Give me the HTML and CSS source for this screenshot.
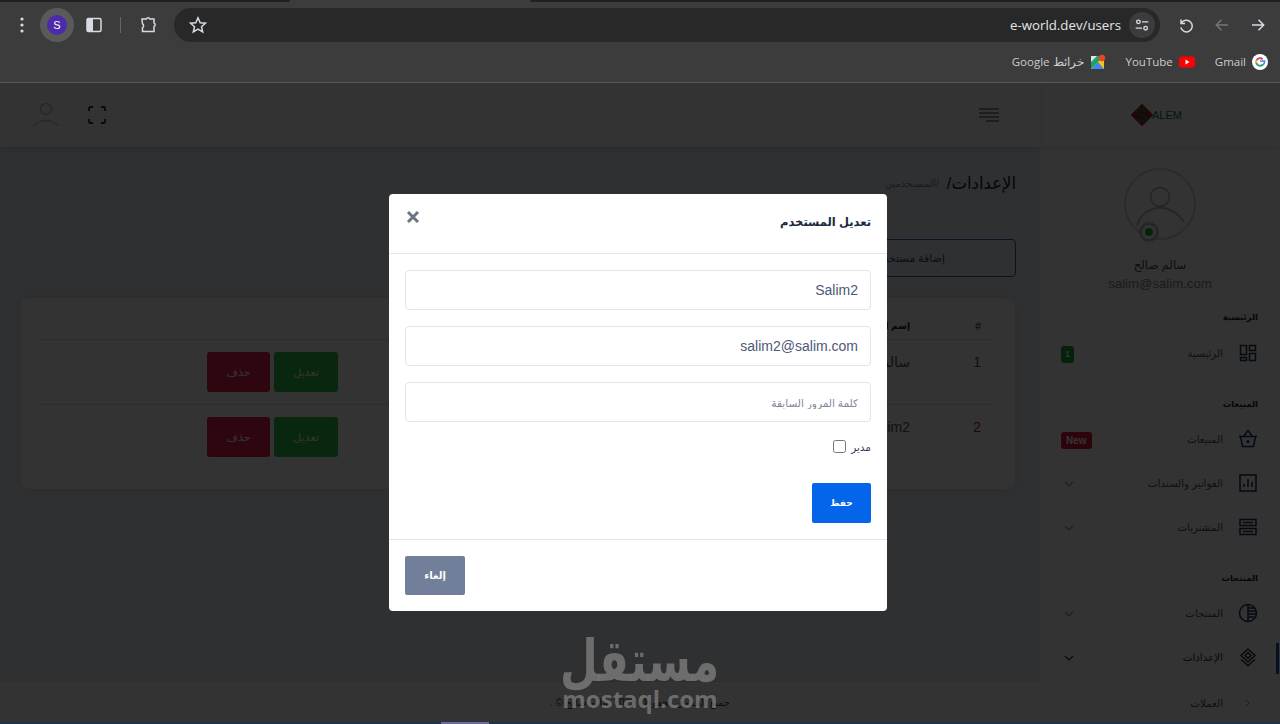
FILE: index.html
```html
<!DOCTYPE html>
<html lang="ar">
<head>
    <meta charset="UTF-8">
    <meta name="viewport" content="width=device-width, initial-scale=1.0">
    <title>e-world.dev/users</title>
    <link rel="stylesheet" href="styles.css">
</head>
<body>
    <!-- Browser top -->
    <div class="tab-strip">
        <span class="tab-dark tab-left"></span>
        <span class="tab-active"></span>
        <span class="tab-dark tab-right"></span>
    </div>
    <div class="toolbar">
        <svg class="tool-icon dots" viewBox="0 0 20 20"><circle cx="10" cy="4" r="1.6"/><circle cx="10" cy="10" r="1.6"/><circle cx="10" cy="16" r="1.6"/></svg>
        <div class="avatar-chip"><span class="avatar-letter">S</span></div>
        <svg class="tool-icon panel" viewBox="0 0 20 20"><rect x="3" y="3.5" width="14" height="13" rx="1.5" class="line"/><rect x="3" y="3.5" width="6" height="13" class="solid"/></svg>
        <span class="tool-sep"></span>
        <svg class="tool-icon ext" viewBox="0 0 20 20"><path class="line" d="M4 4h4.400a1.900 1.900 0 0 1 3.500 0H16v3.900a1.900 1.900 0 0 1 0 3.500V16.500H4.500v-3.800a2.300 2.300 0 0 0 0-3.900z"/></svg>
        <div class="omnibox">
            <svg class="tool-icon star" viewBox="0 0 20 20"><path class="line" d="M10 2.800l2.200 4.900 5.300.5-4 3.500 1.200 5.200-4.700-2.800-4.700 2.800 1.200-5.200-4-3.500 5.300-.5z"/></svg>
            <span class="url">e-world.dev/users</span>
            <span class="tune">
                <svg viewBox="0 0 20 20"><circle cx="6" cy="6.500" r="2" class="line"/><path class="line" d="M10 6.500h7M3 13.500h7"/><circle cx="14" cy="13.500" r="2" class="line"/></svg>
            </span>
        </div>
        <svg class="tool-icon reload" viewBox="0 0 20 20"><path class="line" d="M5 4.500v4h4M5.400 8.200a5.800 5.800 0 1 1-.6 4.200"/></svg>
        <svg class="tool-icon back" viewBox="0 0 20 20"><path class="line" d="M16 10H4.500M9.500 4.800L4.300 10l5.200 5.200"/></svg>
        <svg class="tool-icon forward" viewBox="0 0 20 20"><path class="line" d="M4 10h11.500M10.500 4.800l5.200 5.200-5.200 5.200"/></svg>
    </div>
    <div class="bookmarks">
        <div class="bookmark">
            <span>Google خرائط</span>
            <svg class="mark" viewBox="0 0 16 16">
                <rect x="1" y="2" width="13" height="13" fill="#1ea362"/>
                <path d="M1 15L14 2v13z" fill="#f5c518"/>
                <path d="M1 15l7-7 6 7z" fill="#4285f4"/>
                <path d="M1 2h6L1 8z" fill="#dfe3e8"/>
                <circle cx="12" cy="4" r="3.200" fill="#e8432e"/>
            </svg>
        </div>
        <div class="bookmark">
            <span>YouTube</span>
            <svg class="mark" viewBox="0 0 16 16"><rect y="2.500" width="16" height="11" rx="3" fill="#f00"/><path d="M6.500 5.500l4 2.500-4 2.500z" fill="#fff"/></svg>
        </div>
        <div class="bookmark">
            <span>Gmail</span>
            <svg class="mark" viewBox="0 0 16 16">
                <circle cx="8" cy="8" r="8" fill="#fff"/>
                <path d="M8 7h4.600c.2 2.800-1.600 4.800-4.600 4.800a3.800 3.800 0 0 1 0-7.600c1 0 1.900.4 2.600 1" fill="none" stroke="#4285f4" stroke-width="1.600"/>
                <path d="M4.600 6.200a3.800 3.800 0 0 1 6-1" fill="none" stroke="#ea4335" stroke-width="1.600"/>
                <path d="M4.300 8.900a3.800 3.800 0 0 1 .3-2.700" fill="none" stroke="#fbbc05" stroke-width="1.600"/>
                <path d="M4.300 8.900a3.800 3.800 0 0 0 6.200 1.800" fill="none" stroke="#34a853" stroke-width="1.600"/>
            </svg>
        </div>
    </div>

    <!-- App -->
    <div class="app" dir="rtl">
        <aside class="sidebar">
            <div class="logo">
                <span class="logo-mark"><span class="logo-s">S</span></span>
                <span class="logo-text">ALEM</span>
            </div>
            <div class="profile">
                <div class="profile-pic">
                    <svg viewBox="0 0 72 72" width="72" height="72">
                        <circle cx="36" cy="36" r="35" fill="#fff" stroke="#cfd4da" stroke-width="2"/>
                        <circle cx="36" cy="29" r="9.500" fill="none" stroke="#b9bfc6" stroke-width="2"/>
                        <path d="M13 58c3-12 13-18 23-18s18 5 24 14" fill="none" stroke="#b9bfc6" stroke-width="2"/>
                    </svg>
                    <span class="status-dot"></span>
                </div>
                <div class="profile-name">سالم صالح</div>
                <div class="profile-mail">salim@salim.com</div>
            </div>

            <div class="menu-title">الرئيسية</div>
            <div class="menu-item">
                <svg class="menu-icon" viewBox="0 0 20 20"><path d="M2.500 2.500h6v9h-6zM11.500 2.500h6v5h-6zM2.500 14.500h6v3h-6zM11.500 10.500h6v7h-6z"/></svg>
                <span>الرئيسية</span>
                <span class="badge badge-green">1</span>
            </div>

            <div class="menu-title">المبيعات</div>
            <div class="menu-item">
                <svg class="menu-icon" viewBox="0 0 20 20"><path d="M1 7.500h18M2.500 7.500l2 10h11l2-10M5.500 7.500L10 1.500l4.500 6"/><circle cx="10" cy="12.500" r=".8"/></svg>
                <span>المبيعات</span>
                <span class="badge badge-red">New</span>
            </div>
            <div class="menu-item">
                <svg class="menu-icon" viewBox="0 0 20 20"><path d="M2 2h16v16H2zM6 14v-3M10 14V6M14 14V9"/></svg>
                <span>الفواتير والسندات</span>
                <svg class="chevron" viewBox="0 0 12 12"><path d="M2 4l4 4 4-4"/></svg>
            </div>
            <div class="menu-item">
                <svg class="menu-icon" viewBox="0 0 20 20"><path d="M2 2.500h16v6H2zM2 11.500h16v6H2zM5 5.500h10M5 14.500h10"/></svg>
                <span>المشتريات</span>
                <svg class="chevron" viewBox="0 0 12 12"><path d="M2 4l4 4 4-4"/></svg>
            </div>

            <div class="menu-title">المنتجات</div>
            <div class="menu-item">
                <svg class="menu-icon" viewBox="0 0 20 20"><circle cx="10" cy="10" r="8.500"/><path d="M10 1.500v17M10 5h6M10 8h8M10 11h8M10 14h6"/></svg>
                <span>المنتجات</span>
                <svg class="chevron" viewBox="0 0 12 12"><path d="M2 4l4 4 4-4"/></svg>
            </div>
            <div class="menu-item menu-active">
                <svg class="menu-icon" viewBox="0 0 20 20"><path d="M10 2l7 6.500-7 6.500-7-6.500zM3 12.500l7 6 7-6M7 8.500l3-3 3 3-3 3z"/></svg>
                <span>الإعدادات</span>
                <svg class="chevron" viewBox="0 0 12 12"><path d="M2 4l4 4 4-4"/></svg>
            </div>
            <div class="menu-item sub-item">
                <svg class="sub-arrow" viewBox="0 0 20 20"><path d="M8 7l3 3-3 3"/></svg>
                <span>العملات</span>
            </div>
        </aside>

        <div class="main">
            <header class="top-header">
                <svg class="hamburger" viewBox="0 0 22 16"><path d="M1 2h20M1 6h20M1 10h20M8 14h13"/></svg>
                <div class="header-left">
                    <svg class="full-icon" viewBox="0 0 18 18"><path d="M1 5V2.500A1.500 1.500 0 0 1 2.500 1H5M13 1h2.500A1.500 1.500 0 0 1 17 2.500V5M17 13v2.500a1.500 1.500 0 0 1-1.500 1.500H13M5 17H2.500A1.500 1.500 0 0 1 1 15.500V13"/></svg>
                    <svg class="user-icon" viewBox="0 0 30 28"><circle cx="15" cy="8" r="5.500"/><path d="M2 25c4-4 8-5.500 13-5.500s9 1.500 13 5.500"/></svg>
                </div>
            </header>

            <div class="page-head">
                <h1 class="page-title">الإعدادات/</h1>
                <span class="crumb">/المستخدمين</span>
            </div>
            <div class="add-row">
                <button class="add-btn">إضافة مستخدم</button>
            </div>

            <div class="card">
                <table class="users-table">
                    <colgroup>
                        <col class="col-num"><col class="col-text"><col class="col-text"><col class="col-actions">
                    </colgroup>
                    <thead>
                        <tr><th>#</th><th>إسم المستخدم</th><th>البريد الإلكتروني</th><th></th></tr>
                    </thead>
                    <tbody>
                        <tr>
                            <td class="cell-num">1</td>
                            <td>سالم صالح</td>
                            <td>salim@salim.com</td>
                            <td class="cell-actions"><button class="row-btn btn-edit">تعديل</button><button class="row-btn btn-delete">حذف</button></td>
                        </tr>
                        <tr>
                            <td class="cell-num red-num">2</td>
                            <td>Salim2</td>
                            <td>salim2@salim.com</td>
                            <td class="cell-actions"><button class="row-btn btn-edit">تعديل</button><button class="row-btn btn-delete">حذف</button></td>
                        </tr>
                    </tbody>
                </table>
            </div>

            <footer class="page-footer">جميع الحقوق محفوظة 2023 سالم صالح © .</footer>
        </div>

        <!-- Modal -->
        <div class="overlay">
            <div class="modal">
                <div class="modal-header">
                    <h2 class="modal-title">تعديل المستخدم</h2>
                    <svg class="modal-close" viewBox="0 0 14 14"><path d="M2 2l10 10M12 2L2 12"/></svg>
                </div>
                <div class="modal-body">
                    <input class="field" type="text" value="Salim2">
                    <input class="field" type="text" value="salim2@salim.com">
                    <input class="field" type="password" placeholder="كلمة المرور السابقة">
                    <label class="check-row">مدير <input type="checkbox" class="check"></label>
                    <div class="save-row"><button class="save-btn">حفظ</button></div>
                </div>
                <div class="modal-footer">
                    <button class="cancel-btn">إلغاء</button>
                </div>
            </div>
        </div>
    </div>
    <div class="bottom-strip"><span class="strip-tab"></span></div>

    <!-- Watermark -->
    <div class="watermark">
        <div class="wm-ar">مستقل</div>
        <div class="wm-en">mostaql.com</div>
    </div>
</body>
</html>
```

FILE: styles.css
```css
/* General Styles */
html, body {
    margin: 0;
    height: 724px;
    overflow: hidden;
}

body {
    position: relative;
    display: flex;
    flex-direction: column;
    background: #3c3c3c;
    font-family: "Liberation Sans", "DejaVu Sans", sans-serif;
}

button {
    font-family: inherit;
    border: none;
}

/* Browser top */
.tab-strip {
    display: flex;
    height: 2px;
    background: #3c3c3c;
}

.tab-dark {
    background: #1f1f1f;
    height: 2px;
}

.tab-left {
    width: 290px;
    border-radius: 0 0 6px 0;
}

.tab-active {
    width: 240px;
}

.tab-right {
    flex: 1;
    border-radius: 0 0 0 6px;
}

.toolbar {
    display: flex;
    align-items: center;
    height: 34px;
    margin-top: 6px;
    padding-left: 12px;
}

.tool-icon {
    width: 20px;
    height: 20px;
    flex: none;
}

.tool-icon .line, .tune .line {
    fill: none;
    stroke: #d5dae3;
    stroke-width: 1.500;
}

.dots {
    fill: #d5dae3;
}

.avatar-chip {
    display: flex;
    align-items: center;
    justify-content: center;
    width: 34px;
    height: 34px;
    margin-left: 8px;
    border-radius: 50%;
    background: #5a5a5a;
}

.avatar-letter {
    width: 20px;
    height: 20px;
    border-radius: 50%;
    background: #4c2bab;
    color: #fff;
    font-size: 11px;
    line-height: 20px;
    text-align: center;
}

.panel {
    margin-left: 10px;
}

.panel .solid {
    fill: #d5dae3;
}

.tool-sep {
    width: 1px;
    height: 16px;
    margin-left: 16px;
    background: #666;
}

.ext {
    margin-left: 17px;
}

.omnibox {
    display: flex;
    align-items: center;
    width: 986px;
    height: 34px;
    margin-left: 16px;
    padding-left: 14px;
    box-sizing: border-box;
    border-radius: 17px;
    background: #282828;
}

.url {
    margin-left: auto;
    margin-right: 8px;
    color: #e4e6ea;
    font-family: "Open Sans", sans-serif;
    font-size: 13.250px;
}

.tune {
    display: flex;
    align-items: center;
    justify-content: center;
    width: 26px;
    height: 26px;
    margin-right: 5px;
    border-radius: 50%;
    background: #3c3c3c;
}

.tune svg {
    width: 18px;
    height: 18px;
}

.reload {
    margin-left: 16px;
}

.back {
    margin-left: 16px;
}

.back .line {
    stroke: #757575;
}

.forward {
    margin-left: 16px;
}

.bookmarks {
    display: flex;
    justify-content: flex-end;
    align-items: center;
    gap: 20px;
    height: 39px;
    padding: 0 12px 1px 0;
    border-bottom: 1px solid #565656;
    color: #c9ccd1;
    font-family: "Open Sans", sans-serif;
    font-size: 11.500px;
}

.bookmark {
    display: flex;
    align-items: center;
    gap: 6px;
}

.mark {
    width: 16px;
    height: 16px;
}

/* App layout */
.app {
    position: relative;
    display: flex;
    height: 639px;
    overflow: hidden;
    background: #ebeef5;
}

.bottom-strip {
    height: 2px;
    background: #1c3350;
}

.strip-tab {
    display: block;
    width: 48px;
    height: 2px;
    margin-left: 441px;
    background: #6d6aa0;
}

/* Sidebar */
.sidebar {
    flex: none;
    width: 240px;
    background: #fff;
    color: #3d4657;
}

.logo {
    display: flex;
    direction: ltr;
    align-items: center;
    justify-content: center;
    height: 64px;
    padding-right: 4px;
    box-shadow: 0 2px 6px rgba(20, 30, 60, 0.1);
}

.logo-mark {
    display: flex;
    align-items: center;
    justify-content: center;
    width: 16px;
    height: 16px;
    transform: rotate(45deg);
    background: #b3123a;
}

.logo-s {
    transform: rotate(-45deg);
    color: #107a2c;
    font-size: 21px;
    font-weight: bold;
}

.logo-text {
    margin-left: 2px;
    color: #1a6e35;
    font-size: 11px;
}

.profile {
    padding-top: 21px;
    text-align: center;
}

.profile-pic {
    position: relative;
    width: 72px;
    height: 72px;
    margin: 0 auto 15px;
}

.profile-pic svg {
    display: block;
}

.status-dot {
    position: absolute;
    left: 18px;
    top: 57px;
    width: 8px;
    height: 8px;
    border: 3px solid #fff;
    border-radius: 50%;
    box-shadow: 0 0 0 3px #b9bfc6;
    background: #1fa52f;
}

.profile-name {
    height: 20px;
    font-size: 11.700px;
    line-height: 20px;
}

.profile-mail {
    height: 18px;
    color: #7d8493;
    font-size: 13.200px;
    line-height: 18px;
}

.menu-title {
    height: 20px;
    margin: 14px 22px 4px 0;
    color: #14233f;
    font-size: 8.500px;
    font-weight: bold;
    line-height: 20px;
}

.menu-item + .menu-title {
    margin-top: 19px;
    margin-bottom: 3px;
}

.menu-item {
    position: relative;
    display: flex;
    align-items: center;
    gap: 15px;
    height: 44px;
    padding: 0 22px 0 21px;
    color: #4a5364;
    font-size: 10.300px;
}

.menu-icon {
    flex: none;
    width: 20px;
    height: 20px;
    fill: none;
    stroke: #16325c;
    stroke-width: 1.500;
}

.badge {
    position: absolute;
    left: 21px;
    top: 50%;
    height: 17px;
    margin-top: -7px;
    padding: 0 4px;
    border-radius: 3px;
    color: #fff;
    font-size: 9px;
    font-weight: bold;
    line-height: 17px;
    direction: ltr;
}

.badge-green {
    background: #1fa52f;
}

.badge-red {
    padding: 0 5px;
    background: #e0173f;
    font-size: 10px;
}

.chevron {
    position: absolute;
    left: 23px;
    top: 17px;
    width: 12px;
    height: 12px;
    fill: none;
    stroke: #8d95a5;
    stroke-width: 1.200;
}

.menu-active {
    color: #16325c;
}

.menu-active .chevron {
    stroke: #16325c;
}

.menu-active::after {
    content: "";
    position: absolute;
    right: 1px;
    top: 8px;
    width: 3px;
    height: 31px;
    background: #1d4fa8;
}

.sub-item {
    margin-top: 2px;
}

.sub-arrow {
    flex: none;
    width: 20px;
    height: 20px;
    fill: none;
    stroke: #8d95a5;
    stroke-width: 1;
}

/* Main column */
.main {
    flex: 1;
    display: flex;
    flex-direction: column;
    background: #ebeff8;
}

.top-header {
    display: flex;
    justify-content: space-between;
    align-items: center;
    flex: none;
    height: 64px;
    padding: 0 40px 0 31px;
    background: #fff;
    box-shadow: 0 3px 8px rgba(20, 30, 60, 0.12);
}

.hamburger {
    width: 22px;
    height: 16px;
    fill: none;
    stroke: #6b7280;
    stroke-width: 1.300;
}

.header-left {
    display: flex;
    align-items: center;
    gap: 27px;
}

.full-icon {
    width: 18px;
    height: 18px;
    fill: none;
    stroke: #1b2a45;
    stroke-width: 1.800;
}

.user-icon {
    width: 30px;
    height: 28px;
    fill: none;
    stroke: #c2c6cc;
    stroke-width: 1.500;
}

.page-head {
    display: flex;
    align-items: center;
    gap: 8px;
    height: 30px;
    margin: 21px 24px 0 0;
}

.page-title {
    margin: 0;
    color: #14233f;
    font-size: 16.500px;
    font-weight: normal;
}

.crumb {
    color: #7d8493;
    font-size: 10px;
}

.add-row {
    margin: 41px 24px 21px 0;
}

.add-btn {
    display: block;
    width: 207px;
    height: 38px;
    border: 1px solid #2a62b8;
    border-radius: 4px;
    background: transparent;
    color: #2a4d85;
    font-size: 11px;
    padding-right: 70px;
    text-align: right;
}

.card {
    height: 191px;
    margin: 0 25px 0 21px;
    padding: 1px 22px 0 19px;
    box-sizing: border-box;
    border-radius: 8px;
    background: #fff;
    box-shadow: 0 0 10px 4px rgba(30, 40, 80, 0.05);
}

.users-table {
    width: 953px;
    table-layout: fixed;
    border-collapse: collapse;
}

.col-num {
    width: 71px;
}

.col-text {
    width: 286px;
}

.col-actions {
    width: 310px;
}

.users-table th {
    height: 26px;
    padding: 14px 12px 0;
    border-bottom: 1px solid #dde1ea;
    color: #14233f;
    font-size: 9px;
    text-align: right;
}

.users-table th:first-child {
    font-size: 11px;
    font-weight: normal;
}

.users-table td {
    height: 65px;
    padding: 0 12px;
    box-sizing: border-box;
    color: #4a5364;
    font-size: 14px;
    vertical-align: top;
    line-height: 44px;
}

.users-table tr + tr td {
    border-top: 1px solid #dde1ea;
}

.cell-num {
    color: #38415a;
}

.users-table .red-num {
    color: #b0223f;
}

.users-table .cell-actions {
    padding-top: 12px;
    line-height: normal;
}

.row-btn {
    width: 64px;
    height: 40px;
    padding: 0;
    border-radius: 3px;
    color: #fff;
    font-size: 11px;
}

.btn-edit {
    background: #2ec04c;
}

.btn-delete {
    width: 63px;
    margin-right: 4px;
    background: #e51f4e;
}

.page-footer {
    margin-top: auto;
    height: 40px;
    padding-left: 240px;
    border-top: 1px solid #e3e6ee;
    background: #fff;
    color: #38415a;
    font-size: 10px;
    line-height: 42px;
    text-align: center;
}

/* Modal */
.overlay {
    position: absolute;
    inset: 0;
    direction: ltr;
    padding: 111px 0 0 389px;
    background: rgba(0, 0, 0, 0.8);
}

.modal {
    direction: rtl;
    width: 498px;
    border-radius: 4px;
    background: #fff;
}

.modal-header {
    display: flex;
    justify-content: space-between;
    height: 60px;
    box-sizing: border-box;
    padding: 0 16px;
    border-bottom: 1px solid #e3e6ef;
}

.modal-title {
    margin: 19px 0 0;
    color: #1c2b3f;
    font-size: 11.500px;
    font-weight: bold;
    line-height: 18px;
}

.modal-close {
    width: 14px;
    height: 14px;
    margin: 16px 0 0 1px;
    fill: none;
    stroke: #6d7483;
    stroke-width: 3;
}

.modal-body {
    padding: 16px;
    display: flex;
    flex-direction: column;
}

.field {
    height: 40px;
    box-sizing: border-box;
    margin-bottom: 16px;
    padding: 0 12px;
    border: 1px solid #e1e5f0;
    border-radius: 4px;
    color: #4d5875;
    font-family: inherit;
    font-size: 14px;
    text-align: right;
    direction: rtl;
}

.field::placeholder {
    color: #7f8799;
    font-size: 10.500px;
}

.check-row {
    display: flex;
    align-items: center;
    gap: 5px;
    height: 17px;
    margin-bottom: 28px;
    color: #38415a;
    font-size: 10.500px;
}

.check {
    width: 13px;
    height: 13px;
    margin: 0;
}

.save-row {
    display: flex;
}

.save-btn {
    width: 59px;
    height: 40px;
    padding: 0;
    border-radius: 2px;
    background: #0565ea;
    color: #fff;
    font-size: 9px;
    font-weight: bold;
}

.modal-footer {
    display: flex;
    justify-content: flex-end;
    padding: 16px;
    border-top: 1px solid #e3e6ef;
}

.cancel-btn {
    width: 60px;
    height: 39px;
    padding: 0;
    border-radius: 2px;
    background: #717f9b;
    color: #fff;
    font-size: 10px;
    font-weight: bold;
}

/* Watermark */
.watermark {
    position: absolute;
    left: 540px;
    top: 636px;
    width: 200px;
    text-align: center;
    color: rgba(125, 125, 125, 0.8);
    font-weight: bold;
    pointer-events: none;
}

.wm-ar {
    height: 50px;
    font-family: "DejaVu Sans", sans-serif;
    font-size: 58px;
    line-height: 50px;
    transform: translateX(-5px) scaleX(0.75);
}

.wm-en {
    font-family: "Open Sans", sans-serif;
    font-size: 24px;
    line-height: 26px;
}
```
